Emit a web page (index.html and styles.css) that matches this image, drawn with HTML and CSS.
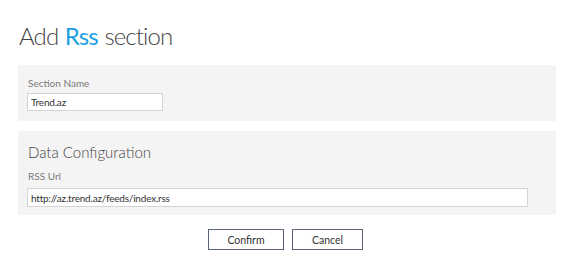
FILE: index.html
```html
<!DOCTYPE html>
<html lang="en">
<head>
    <meta charset="UTF-8">
    <meta name="viewport" content="width=device-width, initial-scale=1.0">
    <title>Add Rss section</title>
    <link rel="stylesheet" href="styles.css">
</head>
<body>
    <div class="page">
        <h1 class="title">Add <span class="accent">Rss</span> section</h1>

        <div class="panel panel-name">
            <label class="field-label" for="sectionName">Section Name</label>
            <input class="field short" type="text" id="sectionName" value="Trend.az">
        </div>

        <div class="panel panel-data">
            <h2 class="panel-title">Data Configuration</h2>
            <label class="field-label" for="rssUrl">RSS Url</label>
            <input class="field long" type="text" id="rssUrl" value="http://az.trend.az/feeds/index.rss">
        </div>

        <div class="actions">
            <button class="btn confirm" type="button">Confirm</button>
            <button class="btn cancel" type="button">Cancel</button>
        </div>
    </div>
</body>
</html>
```

FILE: styles.css
```css
body {
    margin: 0;
    background: #ffffff;
    font-family: Lato, "Open Sans", Arial, sans-serif;
    color: #333333;
}

.page {
    display: flex;
    flex-direction: column;
    padding: 0 9px 0 18px;
}

.title {
    margin: 19px 0 0 1px;
    font-size: 24px;
    font-weight: 300;
    line-height: 34px;
    letter-spacing: -0.9px;
    word-spacing: 1px;
    color: #444444;
}

.accent {
    color: #1ba1e2;
    font-weight: 400;
}

.panel {
    display: flex;
    flex-direction: column;
    align-items: flex-start;
    background: #f4f4f4;
    padding: 0 10px;
}

.panel-name {
    margin-top: 12px;
    height: 56px;
    box-sizing: border-box;
    padding-top: 11px;
}

.panel-data {
    margin-top: 10px;
    height: 84px;
    box-sizing: border-box;
    padding-top: 10px;
}

.panel-title {
    margin: 0;
    font-size: 15px;
    font-weight: 300;
    line-height: 22px;
    color: #444444;
}

.field-label {
    font-size: 10px;
    line-height: 14px;
    color: #7a7a7a;
    margin-bottom: 3px;
}

.panel-data .field-label {
    margin-top: 6px;
    margin-bottom: 5px;
}

.field {
    box-sizing: border-box;
    height: 18px;
    margin: 0 0 0 -1px;
    padding: 0 3px;
    border: 1px solid #d4d4d4;
    background: #ffffff;
    font-family: inherit;
    font-size: 10px;
    letter-spacing: -0.2px;
    color: #333333;
    outline: none;
}

.panel-data .field {
    height: 19px;
}

.short {
    width: 136px;
}

.long {
    width: 501px;
}

.actions {
    display: flex;
    justify-content: center;
    gap: 8px;
    margin-top: 14px;
    padding-right: 3px;
}

.btn {
    box-sizing: border-box;
    height: 21px;
    padding: 0;
    border: 1px solid #5a6478;
    background: #ffffff;
    font-family: inherit;
    font-size: 10.5px;
    color: #333333;
}

.confirm {
    width: 76px;
}

.cancel {
    width: 71px;
}
```
